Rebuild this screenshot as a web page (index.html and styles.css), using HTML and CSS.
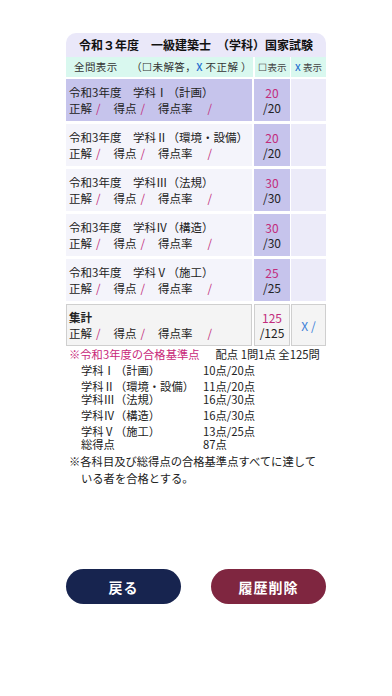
FILE: index.html
```html
<!DOCTYPE html>
<html lang="ja">
<head>
<meta charset="utf-8">
<link rel="stylesheet" href="styles.css">
</head>
<body>
<div class="wrap">
  <div class="card">
    <div class="title">令和３年度　一級建築士　（学科）国家試験</div>
    <div class="filter">
      <div class="f-main">全問表示　 （☐未解答，<span class="x">X</span> 不正解 ）</div>
      <div class="f-btn">☐表示</div>
      <div class="f-btn"><span class="x">X</span> 表示</div>
    </div>
    <div class="rows">
      <div class="row active">
        <div class="cell-main">
          <div class="name">令和3年度　学科Ⅰ（計画）</div>
          <div class="stat">正解<i class="sl">/</i>得点<i class="sl">/</i>得点率<i class="sl last">/</i></div>
        </div>
        <div class="cell-score"><span class="got">20</span><span>/20</span></div>
        <div class="cell-x"></div>
      </div>
      <div class="row">
        <div class="cell-main">
          <div class="name">令和3年度　学科Ⅱ（環境・設備）</div>
          <div class="stat">正解<i class="sl">/</i>得点<i class="sl">/</i>得点率<i class="sl last">/</i></div>
        </div>
        <div class="cell-score"><span class="got">20</span><span>/20</span></div>
        <div class="cell-x"></div>
      </div>
      <div class="row">
        <div class="cell-main">
          <div class="name">令和3年度　学科Ⅲ（法規）</div>
          <div class="stat">正解<i class="sl">/</i>得点<i class="sl">/</i>得点率<i class="sl last">/</i></div>
        </div>
        <div class="cell-score"><span class="got">30</span><span>/30</span></div>
        <div class="cell-x"></div>
      </div>
      <div class="row">
        <div class="cell-main">
          <div class="name">令和3年度　学科Ⅳ（構造）</div>
          <div class="stat">正解<i class="sl">/</i>得点<i class="sl">/</i>得点率<i class="sl last">/</i></div>
        </div>
        <div class="cell-score"><span class="got">30</span><span>/30</span></div>
        <div class="cell-x"></div>
      </div>
      <div class="row">
        <div class="cell-main">
          <div class="name">令和3年度　学科Ⅴ（施工）</div>
          <div class="stat">正解<i class="sl">/</i>得点<i class="sl">/</i>得点率<i class="sl last">/</i></div>
        </div>
        <div class="cell-score"><span class="got">25</span><span>/25</span></div>
        <div class="cell-x"></div>
      </div>
      <div class="row total">
        <div class="cell-main">
          <div class="name bold">集計</div>
          <div class="stat">正解<i class="sl">/</i>得点<i class="sl">/</i>得点率<i class="sl last">/</i></div>
        </div>
        <div class="cell-score"><span class="got">125</span><span>/125</span></div>
        <div class="cell-x"><span>X /</span></div>
      </div>
    </div>
  </div>

  <div class="criteria">
    <div class="c-head"><span class="pink">※令和3年度の合格基準点</span><span class="c-meta">配点 1問1点 全125問</span></div>
    <div class="c-group">
      <div class="c-line"><span class="c-name">学科Ⅰ（計画）</span><span>10点/20点</span></div>
    </div>
    <div class="c-group">
      <div class="c-line"><span class="c-name">学科Ⅱ（環境・設備）</span><span>11点/20点</span></div>
      <div class="c-line"><span class="c-name">学科Ⅲ（法規）</span><span>16点/30点</span></div>
    </div>
    <div class="c-group">
      <div class="c-line"><span class="c-name">学科Ⅳ（構造）</span><span>16点/30点</span></div>
    </div>
    <div class="c-group">
      <div class="c-line"><span class="c-name">学科Ⅴ（施工）</span><span>13点/25点</span></div>
      <div class="c-line"><span class="c-name">総得点</span><span>87点</span></div>
    </div>
    <p class="note">※各科目及び総得点の合格基準点すべてに達している者を合格とする。</p>
  </div>

  <div class="buttons">
    <button class="btn back">戻る</button>
    <button class="btn del">履歴削除</button>
  </div>
</div>
</body>
</html>
```

FILE: styles.css
```css
* { box-sizing: border-box; }
html, body { margin: 0; padding: 0; background: #ffffff; }
body {
  font-family: "Noto Sans CJK JP", "Noto Sans", sans-serif;
  color: #222;
  width: 392px;
  height: 696px;
}
.wrap {
  width: 260px;
  margin: 33px auto 0;
}
.card {
  border-radius: 10px 10px 0 0;
  overflow: hidden;
}
.title {
  height: 24px;
  background: #eae8f9;
  font-size: 12px;
  font-weight: 700;
  line-height: 24px;
  text-align: center;
  color: #111;
  white-space: nowrap;
}
.filter {
  display: flex;
  height: 20px;
  gap: 1px;
  background: #fff;
}
.f-main {
  width: 187px;
  margin-right: 1px;
  background: #d9f8ef;
  font-size: 10.5px;
  letter-spacing: 0.4px;
  line-height: 20px;
  padding-left: 8px;
  color: #333;
  white-space: nowrap;
}
.f-btn {
  flex: 1;
  background: #d9f8ef;
  font-size: 9.5px;
  line-height: 20px;
  text-align: center;
  color: #444;
  white-space: nowrap;
}
.x { color: #1f6fd0; font-weight: 500; }
.rows {
  display: flex;
  flex-direction: column;
  gap: 3px;
  padding-top: 2px;
  background: #fff;
}
.row {
  display: flex;
  height: 42px;
}
.cell-main {
  width: 186px;
  background: #f4f4fb;
  padding: 0 0 0 3px;
  display: flex;
  flex-direction: column;
  justify-content: center;
  font-size: 11.5px;
  line-height: 16px;
  white-space: nowrap;
}
.row.active .cell-main { background: #c6c4ec; }
.cell-score {
  width: 36px;
  margin-left: 2px;
  background: #c6c4ec;
  display: flex;
  flex-direction: column;
  align-items: center;
  justify-content: center;
  font-size: 12px;
  line-height: 15px;
}
.cell-x {
  width: 35px;
  margin-left: 1px;
  background: #ecebf9;
  display: flex;
  align-items: center;
  justify-content: center;
  font-size: 12px;
  color: #1f6fd0;
}
.got { color: #c22c7c; }
.sl {
  font-style: normal;
  color: #c22c7c;
  margin: 0 13px 0 4px;
}
.sl.last { margin: 0 0 0 15px; }
.bold { font-weight: 700; }
.row.total .cell-main,
.row.total .cell-score,
.row.total .cell-x {
  background: #f4f4f4;
  border: 1px solid #cfcfcf;
}
.row.total .cell-main { padding-left: 2px; }
.row.total .cell-x { color: #3a80d8; }

.criteria {
  padding-left: 3px;
  margin-top: 1px;
  font-size: 11.3px;
  line-height: 13px;
  color: #222;
}
.pink { color: #c8287a; }
.c-head {
  display: flex;
  height: 14px;
  line-height: 14px;
  white-space: nowrap;
}
.c-meta { margin-left: 16px; }
.c-group {
  margin-top: 3px;
  padding-left: 12px;
}
.c-group:first-of-type { margin-top: 4px; }
.c-line {
  display: flex;
  white-space: nowrap;
}
.c-name { width: 122px; }
.note {
  margin: 2px 0 0;
  padding-left: 12px;
  text-indent: -12px;
  line-height: 17px;
}
.buttons {
  display: flex;
  justify-content: space-between;
  margin-top: 82px;
}
.btn {
  width: 115px;
  height: 35px;
  border: none;
  border-radius: 18px;
  color: #fff;
  font-family: "Noto Sans CJK JP", "Noto Sans", sans-serif;
  font-size: 14px;
  font-weight: 700;
  padding: 0;
  letter-spacing: 1px;
}
.back { background: #17244f; }
.del { background: #7f2640; }
```
